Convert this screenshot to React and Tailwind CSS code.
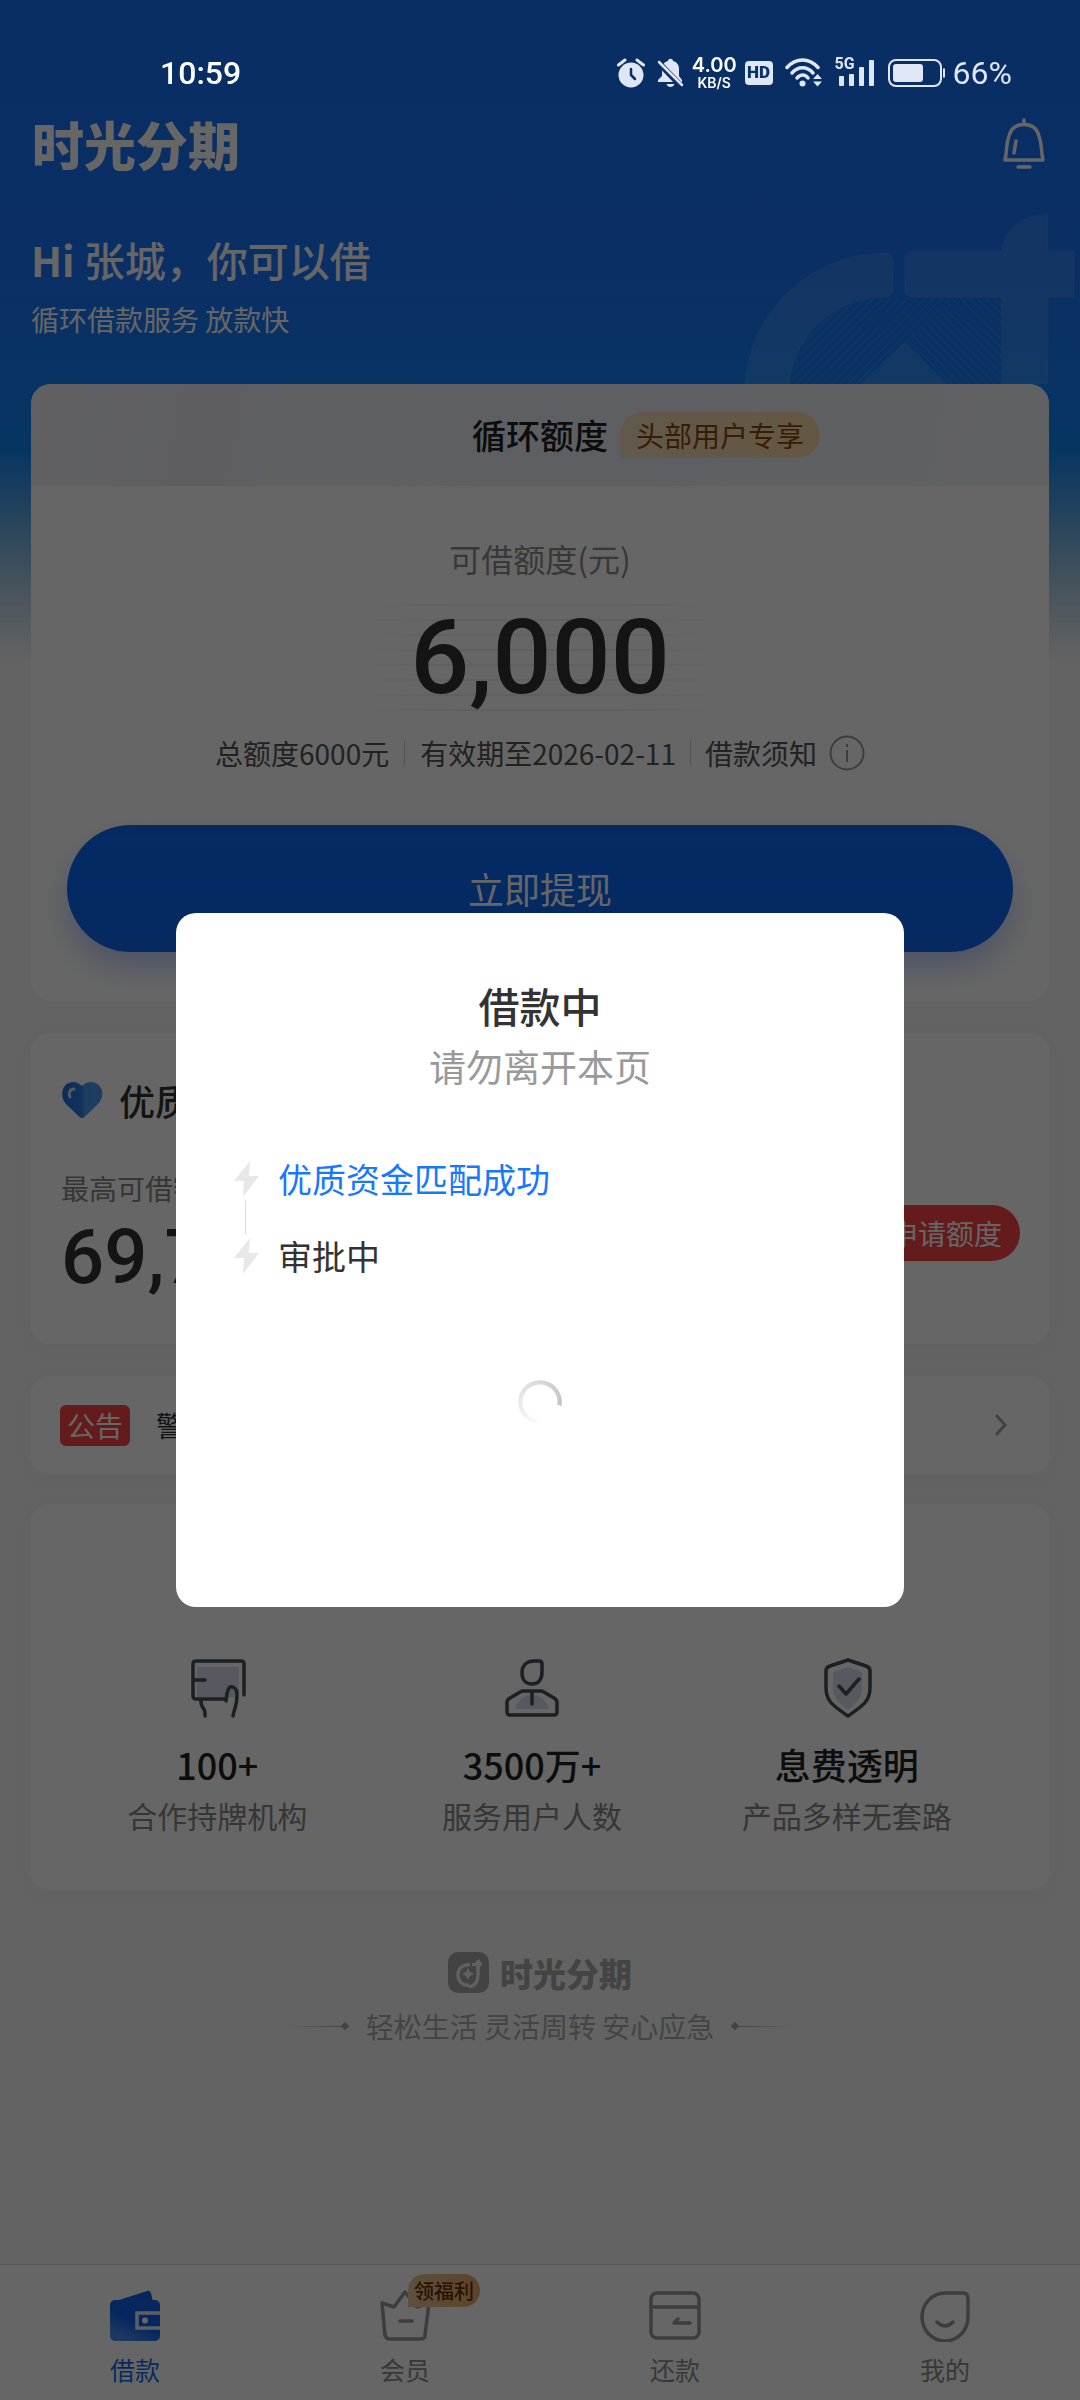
import React from "react";

function StatusBar() {
  return (
    <div className="relative z-20 flex h-[98px] items-center justify-between pt-12 pr-[68px] pl-40 text-[#dfe6f5]">
      <span className="font-[Roboto,sans-serif] text-[32px] leading-[50px] font-medium text-white">10:59</span>
      <div className="flex items-center gap-3">
        <svg width="28" height="30" viewBox="0 0 28 30" fill="none" aria-hidden="true">
          <circle cx="14" cy="17" r="12.5" fill="currentColor" />
          <path d="M1.5 7 8 2M26.5 7 20 2" stroke="currentColor" strokeWidth="3" strokeLinecap="round" />
          <path d="M14 11v6l4 4" stroke="#0a3067" strokeWidth="2.5" strokeLinecap="round" strokeLinejoin="round" />
        </svg>
        <svg width="27" height="30" viewBox="0 0 27 30" fill="none" aria-hidden="true">
          <path d="M11 3c0-3 5-3 5 0 4 1 6 4 6 8v7l3 4v2H1v-2l4-4v-7c0-4 2-7 6-8ZM9.500 26h8c-1 4-7 4-8 0Z" fill="currentColor" />
          <path d="M0 3 26 30" stroke="#0a3067" strokeWidth="6" />
          <path d="M2 4 25 27" stroke="currentColor" strokeWidth="2.500" strokeLinecap="round" />
        </svg>
        <div className="-ml-1 flex flex-col items-center font-[Inter,sans-serif] font-semibold text-white">
          <span className="text-[20px] leading-[20px]">4.00</span>
          <span className="text-[14px] leading-[16px]">KB/S</span>
        </div>
        <span className="-ml-1 flex h-6 w-7 items-center justify-center rounded bg-[#dfe6f5] font-[Roboto,sans-serif] text-[17px] font-black text-[#0a3067]">
          HD
        </span>
        <svg width="38" height="30" viewBox="0 0 38 30" fill="none" aria-hidden="true">
          <g stroke="currentColor" strokeWidth="3.500" strokeLinecap="round">
            <path d="M2 9.500C11-.5 24-.5 33 9.500" />
            <path d="M7 15c6-7 15-7 21 0" />
            <path d="M12 20c3.500-4 8-4 11 0" />
          </g>
          <circle cx="17.500" cy="25.500" r="3" fill="currentColor" />
          <path d="M28 21h9l-4.500-5ZM28 23.500h9l-4.500 5Z" fill="currentColor" />
        </svg>
        <div className="relative">
          <span className="absolute -top-1 left-0 font-[Roboto,sans-serif] text-[16px] leading-[20px] font-bold">5G</span>
          <svg width="41" height="30" viewBox="0 0 41 30" fill="currentColor" aria-hidden="true">
            <rect x="4" y="18" width="5" height="10" rx="1" />
            <rect x="14" y="16" width="5" height="12" rx="1" />
            <rect x="24" y="9" width="5" height="19" rx="1" />
            <rect x="34" y="2" width="5" height="26" rx="1" />
          </svg>
        </div>
        <svg width="57" height="28" viewBox="0 0 57 28" fill="none" aria-hidden="true">
          <rect x="1" y="1" width="52" height="26" rx="7" stroke="currentColor" strokeWidth="2" />
          <rect x="5" y="5" width="30" height="18" rx="3" fill="currentColor" />
          <path d="M56 9.500v9" stroke="currentColor" strokeWidth="2" />
        </svg>
        <span className="-ml-1 font-[Roboto,sans-serif] text-[32px] leading-[50px]">66%</span>
      </div>
    </div>
  );
}

function HeaderArt() {
  return (
    <svg className="absolute top-[200px] right-0" width="380" height="184" viewBox="0 0 380 184" fill="none" aria-hidden="true">
      <defs>
        <pattern id="hatchA" width="6" height="6" patternUnits="userSpaceOnUse" patternTransform="rotate(45)">
          <path d="M0 0v6" stroke="#fff" strokeOpacity=".1" strokeWidth="2" />
        </pattern>
        <pattern id="hatchB" width="6" height="6" patternUnits="userSpaceOnUse" patternTransform="rotate(-45)">
          <path d="M0 0v6" stroke="#fff" strokeOpacity=".1" strokeWidth="2" />
        </pattern>
      </defs>
      <path d="M89 184A96 96 0 0 1 185 98h65l-45 46-44 40Z" fill="url(#hatchA)" />
      <path d="M250 98h52v86h-56l-41-40Z" fill="url(#hatchB)" />
      <g fill="#fff" fillOpacity=".11" stroke="#fff" strokeOpacity=".08">
        <path d="M45 184A141 141 0 0 1 185 53q8 0 8 8v27q0 9-9 9A96 96 0 0 0 89 184Z" />
        <path d="M212 51h90q4-34 46-37v37h26v46h-26v87h-46V97h-90q-7 0-7-7V58q0-7 7-7Z" />
        <path d="m161 184 40-38q4-4 8 0l37 38Z" />
      </g>
    </svg>
  );
}

function BellIcon() {
  return (
    <svg width="44" height="52" viewBox="0 0 44 52" fill="none" stroke="#fff" strokeWidth="3.500" strokeLinecap="round" strokeLinejoin="round" aria-hidden="true">
      <path d="M22 2v4M3 42h38C39 34 40 26 37 18 35 10 29 6.500 22 6.500S9 10 7 18C4 26 5 34 3 42ZM14 23l-2 12M16 49h12" />
    </svg>
  );
}

function HeartIcon() {
  return (
    <svg width="42" height="38" viewBox="0 0 42 38" aria-hidden="true">
      <defs>
        <linearGradient id="heart" x1="0" x2="1">
          <stop offset="0" stopColor="#1c6fe0" />
          <stop offset=".5" stopColor="#2f80e8" />
          <stop offset=".55" stopColor="#4a97ee" />
          <stop offset="1" stopColor="#4c9af0" />
        </linearGradient>
      </defs>
      <path d="M21 5C15-1 6 0 2.500 7-.5 14 2 20 6 24l12.500 12q2.500 2 5 0L36 24c5-5 7-11 4-17-4-7-13-8-19-2Z" fill="url(#heart)" />
      <path d="M13 8c-4 0-6 4-4 8" stroke="#cfe3fb" strokeWidth="3" strokeLinecap="round" fill="none" />
    </svg>
  );
}

function CreditCard() {
  return (
    <section className="relative mx-[31px] mt-[45px] overflow-hidden rounded-[20px] bg-white">
      <header className="grid h-[102px] grid-cols-[1fr_auto_1fr] items-center bg-[linear-gradient(100deg,#f1f2f9_0%,#eaebf6_18%,#edf0f6_26%,#e8edf4_55%,#f1f3f8_100%)]">
        <span />
        <h2 className="text-[34px] leading-[48px] font-medium text-[#222]">循环额度</h2>
        <span className="ml-3 justify-self-start rounded-full rounded-bl-md bg-[linear-gradient(90deg,#f3dfc0,#fbd9a6)] px-4 text-[28px] leading-[46px] text-[#8a4a08]">
          头部用户专享
        </span>
      </header>
      <div className="flex flex-col items-center px-9 pt-[50px] pb-[49px]">
        <p className="text-[32px] leading-[44px] text-[#8c8c8c]">可借额度(元)</p>
        <div className="relative mt-[18px] px-14">
          <div className="absolute inset-x-0 top-1.5 bottom-1.5 bg-[repeating-linear-gradient(180deg,#f1f1f1_0px,#f1f1f1_2px,transparent_2px,transparent_15px)] [mask-image:linear-gradient(90deg,transparent,#000_30%,#000_70%,transparent)]" />
          <strong className="relative block font-[Roboto,sans-serif] text-[104px] leading-[120px] font-medium text-[#333]">6,000</strong>
        </div>
        <div className="mt-[15px] flex items-center text-[28px] leading-[40px] text-[#555]">
          <span>总额度6000元</span>
          <span className="mx-[15px] h-[26px] w-px bg-[#ccc]" />
          <span>有效期至2026-02-11</span>
          <span className="mx-[14px] h-[26px] w-px bg-[#ccc]" />
          <button type="button" className="flex items-center gap-3">
            借款须知
            <svg width="36" height="36" viewBox="0 0 36 36" fill="none" stroke="#999" strokeWidth="2" aria-hidden="true">
              <circle cx="18" cy="18" r="16.500" />
              <path d="M18 9v3M18 15v12" />
            </svg>
          </button>
        </div>
        <button
          type="button"
          className="mt-[52px] w-full rounded-full bg-[linear-gradient(180deg,#1268ee_0%,#0a6bf5_12%,#086af6_40%,#1168f0_100%)] text-[36px] leading-[127px] text-white shadow-[0_16px_28px_rgba(60,110,255,0.3)]"
        >
          立即提现
        </button>
      </div>
    </section>
  );
}

function OfferCard() {
  return (
    <section className="mx-[30px] mt-8 rounded-[20px] bg-white pt-[43px] pr-[30px] pb-[47px] pl-[31px] shadow-[0_4px_16px_rgba(0,0,0,0.03)]">
      <div className="flex items-center gap-4">
        <HeartIcon />
        <h2 className="text-[36px] leading-[48px] font-medium text-[#333]">优质</h2>
      </div>
      <div className="mt-11 flex items-center justify-between">
        <div>
          <p className="text-[28px] leading-[40px] text-[#888]">最高可借额</p>
          <strong className="mt-[9px] block font-[Roboto,sans-serif] text-[76px] leading-[80px] font-medium text-[#333]">69,7</strong>
        </div>
        <button type="button" className="rounded-full bg-[#fa4446] px-[18px] text-[28px] leading-[56px] text-white">
          申请额度
        </button>
      </div>
    </section>
  );
}

function NoticeCard() {
  return (
    <a href="#notice" className="mx-[30px] mt-8 flex h-[98px] items-center rounded-[20px] bg-white pr-[42px] pl-[30px] text-[28px] shadow-[0_4px_16px_rgba(0,0,0,0.03)]">
      <span className="rounded-md bg-[#fa4446] px-[7px] leading-[41px] text-white">公告</span>
      <span className="ml-[26px] grow leading-[41px] text-[#333]">警</span>
      <svg width="14" height="26" viewBox="0 0 14 26" fill="none" stroke="#a6a6a6" strokeWidth="3" aria-hidden="true">
        <path d="m2 3 9 10-9 10" />
      </svg>
    </a>
  );
}

const iconProps = {
  width: 60,
  height: 60,
  viewBox: "0 0 60 60",
  fill: "none",
  stroke: "#455055",
  strokeWidth: 3.5,
  strokeLinecap: "round",
  strokeLinejoin: "round",
  "aria-hidden": true,
};

const stats = [
  {
    value: "100+",
    label: "合作持牌机构",
    icon: (
      <svg {...iconProps}>
        <path d="M10 9h42v30H10Z" fill="#dcdcf0" stroke="none" />
        <path d="M39 41H9q-3 0-3-3V6q0-3 3-3h45q3 0 3 3v31M7 22h11M14 42c-1 9 5 6 4 16M39 43c1-7 1-12 4-14 5-1 7 3 7 8 0 13-3 13-4 21" />
      </svg>
    ),
  },
  {
    value: "3500万+",
    label: "服务用户人数",
    icon: (
      <svg {...iconProps}>
        <path d="M13 51q3-12 17-15 14 3 17 15Z" fill="#dcdcf0" stroke="none" />
        <path d="M32 3h5q3 0 3 3v8c0 8-4 12-10 12s-10-4-10-11S24 3 32 3ZM20 33h20l12 7q3 2 3 4v10q0 3-3 3H8q-3 0-3-3V44q0-2 3-4ZM30 34v12" />
      </svg>
    ),
  },
  {
    value: "息费透明",
    label: "产品多样无套路",
    icon: (
      <svg {...iconProps}>
        <path d="m31 9 14 5v19q-2 10-14 19-13-9-15-19V14Z" fill="#dcdcf0" stroke="none" />
        <path d="m31 2 18 6q4 1 4 5v17c0 14-8 18-22 28C17 48 9 44 9 30V13q0-4 4-5ZM22 28l7 8 13-15" />
      </svg>
    ),
  },
];

function StatsCard() {
  return (
    <section className="mx-[30px] mt-[30px] rounded-[20px] bg-white pt-[154px] pr-[46px] pb-[55px] pl-[30px] shadow-[0_4px_16px_rgba(0,0,0,0.03)]">
      <ul className="grid grid-cols-3">
        {stats.map((s) => (
          <li key={s.value} className="flex flex-col items-center">
            {s.icon}
            <strong className="mt-6 text-[36px] leading-[44px] font-medium text-[#222]">{s.value}</strong>
            <span className="mt-[9px] text-[30px] leading-[40px] text-[#888]">{s.label}</span>
          </li>
        ))}
      </ul>
    </section>
  );
}

function BrandFooter() {
  return (
    <footer className="mt-[62px] flex flex-col items-center text-[#ababab]">
      <div className="flex items-center gap-[11px]">
        <svg width="41" height="41" viewBox="0 0 41 41" fill="none" aria-hidden="true">
          <rect width="41" height="41" rx="10" fill="#a8a8a8" />
          <path d="M22 13c-7-1-12 3-12 10 0 7 6 11 11 10M30 13v10c0 7-3 11-9 12" stroke="#f2f2f2" strokeWidth="3.500" />
          <path d="M24 11h3c1-2 2-3 5-4v3h2v4H24Z" fill="#f2f2f2" />
          <path d="m20 16 2 4 4 2-4 2-2 4-2-4-4-2 4-2Z" fill="#f2f2f2" />
        </svg>
        <strong className="text-[33px] leading-[40px] font-black">时光分期</strong>
      </div>
      <div className="mt-[13px] flex items-center gap-[18px] text-[28px] leading-[40px]">
        <span className="flex items-center">
          <span className="h-px w-14 bg-[linear-gradient(90deg,transparent,#aaa)]" />
          <span className="size-1.5 rotate-45 bg-[#aaa]" />
        </span>
        <span>轻松生活 灵活周转 安心应急</span>
        <span className="flex items-center">
          <span className="size-1.5 rotate-45 bg-[#aaa]" />
          <span className="h-px w-14 bg-[linear-gradient(90deg,#aaa,transparent)]" />
        </span>
      </div>
    </footer>
  );
}

const tabIcon = {
  width: 52,
  height: 52,
  viewBox: "0 0 52 52",
  fill: "none",
  stroke: "#999",
  strokeWidth: 3.5,
  strokeLinecap: "round",
  strokeLinejoin: "round",
  "aria-hidden": true,
};

const tabs = [
  {
    label: "借款",
    active: true,
    icon: (
      <svg {...tabIcon} stroke="none">
        <defs>
          <linearGradient id="wallet" x1="1" y1="0" x2=".4" y2="1">
            <stop offset="0" stopColor="#1468ee" />
            <stop offset=".6" stopColor="#0f62ea" />
            <stop offset="1" stopColor="#4a8cf4" />
          </linearGradient>
        </defs>
        <path d="m4 12 34-11q3-1 4 2l2 9Z" fill="#0f5fe6" />
        <rect x="1" y="10" width="50" height="41" rx="5" fill="url(#wallet)" />
        <path d="M51 23H28v15h23" stroke="#e8eefb" strokeWidth="3.500" strokeLinecap="butt" strokeLinejoin="miter" />
        <circle cx="36" cy="30.500" r="3" fill="#fff" />
      </svg>
    ),
  },
  {
    label: "会员",
    badge: "领福利",
    icon: (
      <svg {...tabIcon}>
        <path d="M26 2 15 17 3 13l3 32q1 4 5 4h31q4 0 4-4l4-32-12 4ZM21 31h12" />
      </svg>
    ),
  },
  {
    label: "还款",
    icon: (
      <svg {...tabIcon}>
        <rect x="2" y="3" width="48" height="45" rx="6" />
        <path d="M2 17h48M41 33H25l4-4" />
      </svg>
    ),
  },
  {
    label: "我的",
    icon: (
      <svg {...tabIcon}>
        <path d="M26 3h18q5 0 5 5v18a23 24 0 1 1-23-23ZM18 32q8 8 16 0" />
      </svg>
    ),
  },
];

function TabBar() {
  return (
    <nav className="mt-auto grid grid-cols-4 border-t border-[#ddd] bg-white pt-[25px] pb-[15px]">
      {tabs.map((t) => (
        <button key={t.label} type="button" className="relative flex flex-col items-center">
          {t.icon}
          <span className={t.active ? "mt-[11px] text-[25px] leading-[32px] text-[#1468ee]" : "mt-[11px] text-[25px] leading-[32px] text-[#8c8c8c]"}>
            {t.label}
          </span>
          {t.badge && (
            <span className="absolute -top-4 left-1/2 ml-[3px] rounded-full rounded-bl-md bg-[linear-gradient(90deg,#e8c79c,#e6ab62)] px-1.5 text-[20px] leading-[33px] font-medium text-[#6b2a05]">
              {t.badge}
            </span>
          )}
        </button>
      ))}
    </nav>
  );
}

function Bolt() {
  return (
    <svg width="25" height="36" viewBox="0 0 25 36" aria-hidden="true">
      <path d="M16 0 0 20h10L9 36l16-21H15Z" fill="#e8e8e8" />
    </svg>
  );
}

function LoanDialog() {
  return (
    <div className="fixed inset-0 z-10 flex items-center justify-center bg-black/60 px-44 pt-30">
      <div role="dialog" aria-labelledby="dialog-title" className="flex w-full flex-col items-center rounded-[20px] bg-white pt-[62px] pb-[183px]">
        <h1 id="dialog-title" className="text-[41px] leading-[60px] font-medium text-[#333]">借款中</h1>
        <p className="mt-[5px] text-[37px] leading-[52px] text-[#999]">请勿离开本页</p>
        <ol className="mt-[65px] w-full pl-[58px] text-[34px] leading-[44px]">
          <li className="flex items-center gap-[19px] text-[#1677ff]">
            <Bolt />
            优质资金匹配成功
          </li>
          <li className="ml-[11px] h-[33px] w-px bg-[#ddd]" aria-hidden="true" />
          <li className="flex items-center gap-[19px] text-[#333]">
            <Bolt />
            审批中
          </li>
        </ol>
        <div
          role="status"
          aria-label="审批中"
          className="mt-[102px] size-11 rounded-full bg-[conic-gradient(from_100deg,transparent_0%,transparent_20%,#f3f3f3_35%,#c4c4c4_100%)] [mask-image:radial-gradient(circle,transparent_17px,#000_18px)]"
        />
      </div>
    </div>
  );
}

export default function App() {
  return (
    <div
      lang="zh-CN"
      className="relative flex min-h-screen flex-col bg-[#f7f7f8] bg-[linear-gradient(180deg,#1474f8_0px,#1a75fb_250px,#1680fb_384px,#1286f5_450px,#6fb0e4_530px,#c0d6e8_600px,#f7f7f8_660px)] font-['Noto_Sans_CJK_SC',sans-serif]"
    >
      <HeaderArt />
      <StatusBar />
      <div className="mt-[9px] flex h-[74px] items-center justify-between pr-[34px] pl-8 text-white">
        <strong className="text-[52px] leading-[60px] font-black">时光分期</strong>
        <button type="button" aria-label="消息">
          <BellIcon />
        </button>
      </div>
      <div className="mt-[50px] px-[31px] text-white">
        <h1 className="text-[41px] leading-[56px] font-medium">
          <b className="font-bold">Hi</b> 张城，你可以借
        </h1>
        <p className="mt-3 text-[28px] leading-[40px]">循环借款服务 放款快</p>
      </div>
      <CreditCard />
      <OfferCard />
      <NoticeCard />
      <StatsCard />
      <BrandFooter />
      <TabBar />
      <LoanDialog />
    </div>
  );
}
